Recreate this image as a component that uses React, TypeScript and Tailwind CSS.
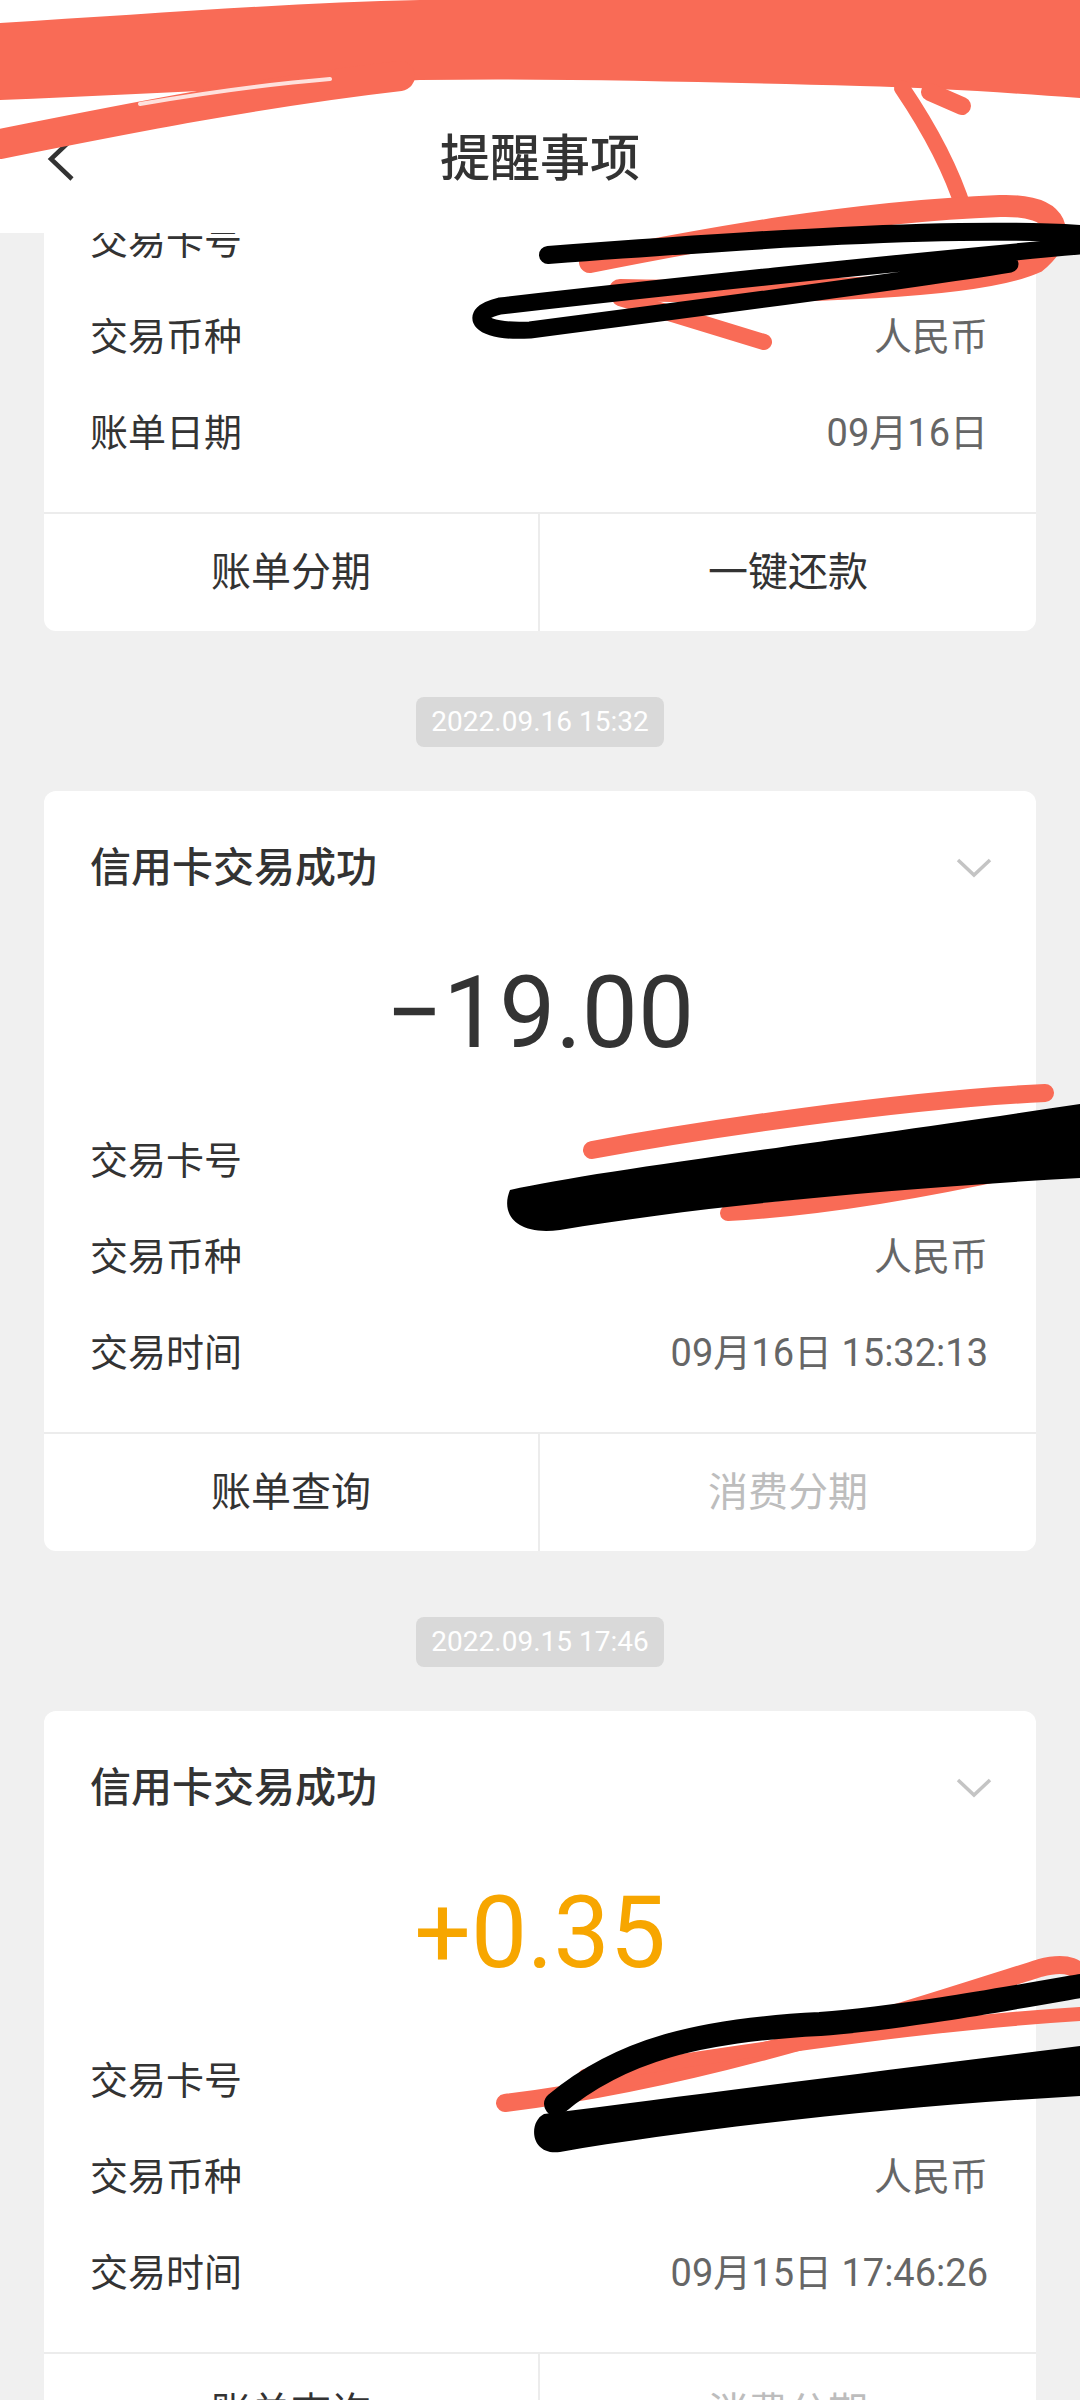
import React from "react";

const RED = "#f96b56";

function Scribbles() {
  return (
    <svg
      className="pointer-events-none absolute left-0 top-0 z-20"
      width={1080}
      height={2400}
      viewBox="0 0 1080 2400"
      fill="none"
    >
      {/* top redaction */}
      <path
        d="M0 23 C 150 14 300 2 420 0 L 1080 0 L 1080 98 C 1000 92 930 88 860 86 C 700 82 560 78 420 80 C 300 86 150 94 0 100 Z"
        fill={RED}
      />
      <path d="M0 144 C 120 120 260 92 400 76" stroke={RED} strokeWidth={30} strokeLinecap="round" />
      <path d="M140 104 C 210 92 270 84 330 79" stroke="#ffffff" strokeWidth={4} strokeLinecap="round" opacity={0.8} />
      <path d="M902 88 C 925 122 950 165 964 210" stroke={RED} strokeWidth={16} strokeLinecap="round" />
      <path d="M930 92 L 962 106" stroke={RED} strokeWidth={18} strokeLinecap="round" />
      <path
        d="M590 262 C 700 240 850 212 1000 206 C 1062 204 1068 236 1036 262 C 980 288 800 294 620 290"
        stroke={RED}
        strokeWidth={22}
        strokeLinecap="round"
      />
      <path d="M620 298 L 764 342" stroke={RED} strokeWidth={16} strokeLinecap="round" />
      <path d="M548 255 C 750 240 950 226 1080 234" stroke="#000" strokeWidth={18} strokeLinecap="round" />
      <path
        d="M1080 246 C 900 262 640 290 500 306 C 466 314 478 333 530 330 C 700 308 900 282 1010 264"
        stroke="#000"
        strokeWidth={17}
        strokeLinecap="round"
      />

      {/* card 2 redaction */}
      <path d="M592 1150 C 700 1130 900 1100 1045 1093" stroke={RED} strokeWidth={18} strokeLinecap="round" />
      <path d="M728 1213 C 820 1208 920 1192 1050 1162" stroke={RED} strokeWidth={16} strokeLinecap="round" />
      <path
        d="M510 1190 C 600 1170 800 1146 1080 1104 L 1080 1178 C 900 1188 700 1206 560 1230 C 516 1236 500 1214 510 1190 Z"
        fill="#000"
      />

      {/* card 3 redaction */}
      <path d="M505 2103 C 700 2080 900 2012 1040 1968 C 1070 1960 1080 1970 1080 1976" stroke={RED} strokeWidth={18} strokeLinecap="round" />
      <path d="M585 2076 C 800 2042 950 2022 1080 2014" stroke={RED} strokeWidth={14} strokeLinecap="round" />
      <path d="M556 2104 C 620 2050 700 2030 820 2024 C 900 2018 1000 2000 1080 1986" stroke="#000" strokeWidth={24} strokeLinecap="round" />
      <path
        d="M544 2114 C 700 2094 900 2068 1080 2046 L 1080 2096 C 900 2106 700 2128 560 2152 C 530 2156 528 2122 544 2114 Z"
        fill="#000"
      />
    </svg>
  );
}

function Row({ label, value }: { label: string; value: string }) {
  return (
    <div className="flex h-[96px] items-center justify-between">
      <span className="text-[38px] leading-none text-[#333333]">{label}</span>
      <span className="text-[38px] leading-none text-[#666666]">{value}</span>
    </div>
  );
}

function ChevronDown() {
  return (
    <svg width={36} height={22} viewBox="0 0 36 22" fill="none">
      <path d="M2 3 L18 18 L34 3" stroke="#c4c4c4" strokeWidth={3.5} strokeLinejoin="miter" />
    </svg>
  );
}

function Pill({ text }: { text: string }) {
  return (
    <div className="flex justify-center pb-[44px] pt-[66px]">
      <span className="flex h-[50px] items-center rounded-[8px] bg-[#d9d9d9] px-[15px] text-[28px] leading-none text-white">
        {text}
      </span>
    </div>
  );
}

function TxCard({
  amount,
  amountClass,
  time,
}: {
  amount: string;
  amountClass: string;
  time: string;
}) {
  return (
    <div className="mx-[44px] shrink-0 overflow-hidden rounded-[12px] bg-white">
      <div className="flex h-[154px] items-center justify-between pl-[46px] pr-[44px]">
        <span className="text-[41px] font-medium leading-none text-[#333333]">信用卡交易成功</span>
        <ChevronDown />
      </div>
      <div className={"flex h-[136px] items-center justify-center text-[100px] leading-none " + amountClass}>
        {amount}
      </div>
      <div className="mt-[32px] pb-[31px] pl-[46px] pr-[48px]">
        <Row label="交易卡号" value="" />
        <Row label="交易币种" value="人民币" />
        <Row label="交易时间" value={time} />
      </div>
      <div className="grid h-[119px] grid-cols-2 border-t-2 border-[#ececec]">
        <div className="flex items-center justify-center border-r-2 border-[#ececec] text-[40px] leading-none text-[#333333]">
          账单查询
        </div>
        <div className="flex items-center justify-center text-[40px] leading-none text-[#bdbdbd]">消费分期</div>
      </div>
    </div>
  );
}

export default function App() {
  return (
    <div className="relative h-[2400px] w-[1080px] overflow-hidden bg-[#f0f0f0] font-['Roboto','Noto_Sans_CJK_SC',sans-serif]">
      {/* header */}
      <div className="relative z-10 h-[233px] bg-white pt-[84px]">
        <div className="grid h-[150px] grid-cols-[1fr_auto_1fr] items-center">
          <div className="pl-[45px]">
            <svg width={32} height={46} viewBox="0 0 32 46" fill="none">
              <path d="M27 3 L6 23 L27 43" stroke="#333333" strokeWidth={4.5} />
            </svg>
          </div>
          <span className="text-[50px] font-medium leading-none text-[#333333]">提醒事项</span>
          <div />
        </div>
      </div>

      {/* first card, scrolled under the header */}
      <div className="flex h-[398px] flex-col justify-end overflow-hidden">
        <div className="mx-[44px] shrink-0 overflow-hidden rounded-b-[12px] bg-white">
          <div className="pb-[31px] pl-[46px] pr-[48px]">
            <Row label="交易卡号" value="" />
            <Row label="交易币种" value="人民币" />
            <Row label="账单日期" value="09月16日" />
          </div>
          <div className="grid h-[119px] grid-cols-2 border-t-2 border-[#ececec]">
            <div className="flex items-center justify-center border-r-2 border-[#ececec] text-[40px] leading-none text-[#333333]">
              账单分期
            </div>
            <div className="flex items-center justify-center text-[40px] leading-none text-[#333333]">一键还款</div>
          </div>
        </div>
      </div>

      <Pill text="2022.09.16 15:32" />
      <TxCard amount="−19.00" amountClass="text-[#333333]" time="09月16日 15:32:13" />

      <Pill text="2022.09.15 17:46" />
      <TxCard amount="+0.35" amountClass="text-[#f7a600]" time="09月15日 17:46:26" />

      <Scribbles />
    </div>
  );
}
